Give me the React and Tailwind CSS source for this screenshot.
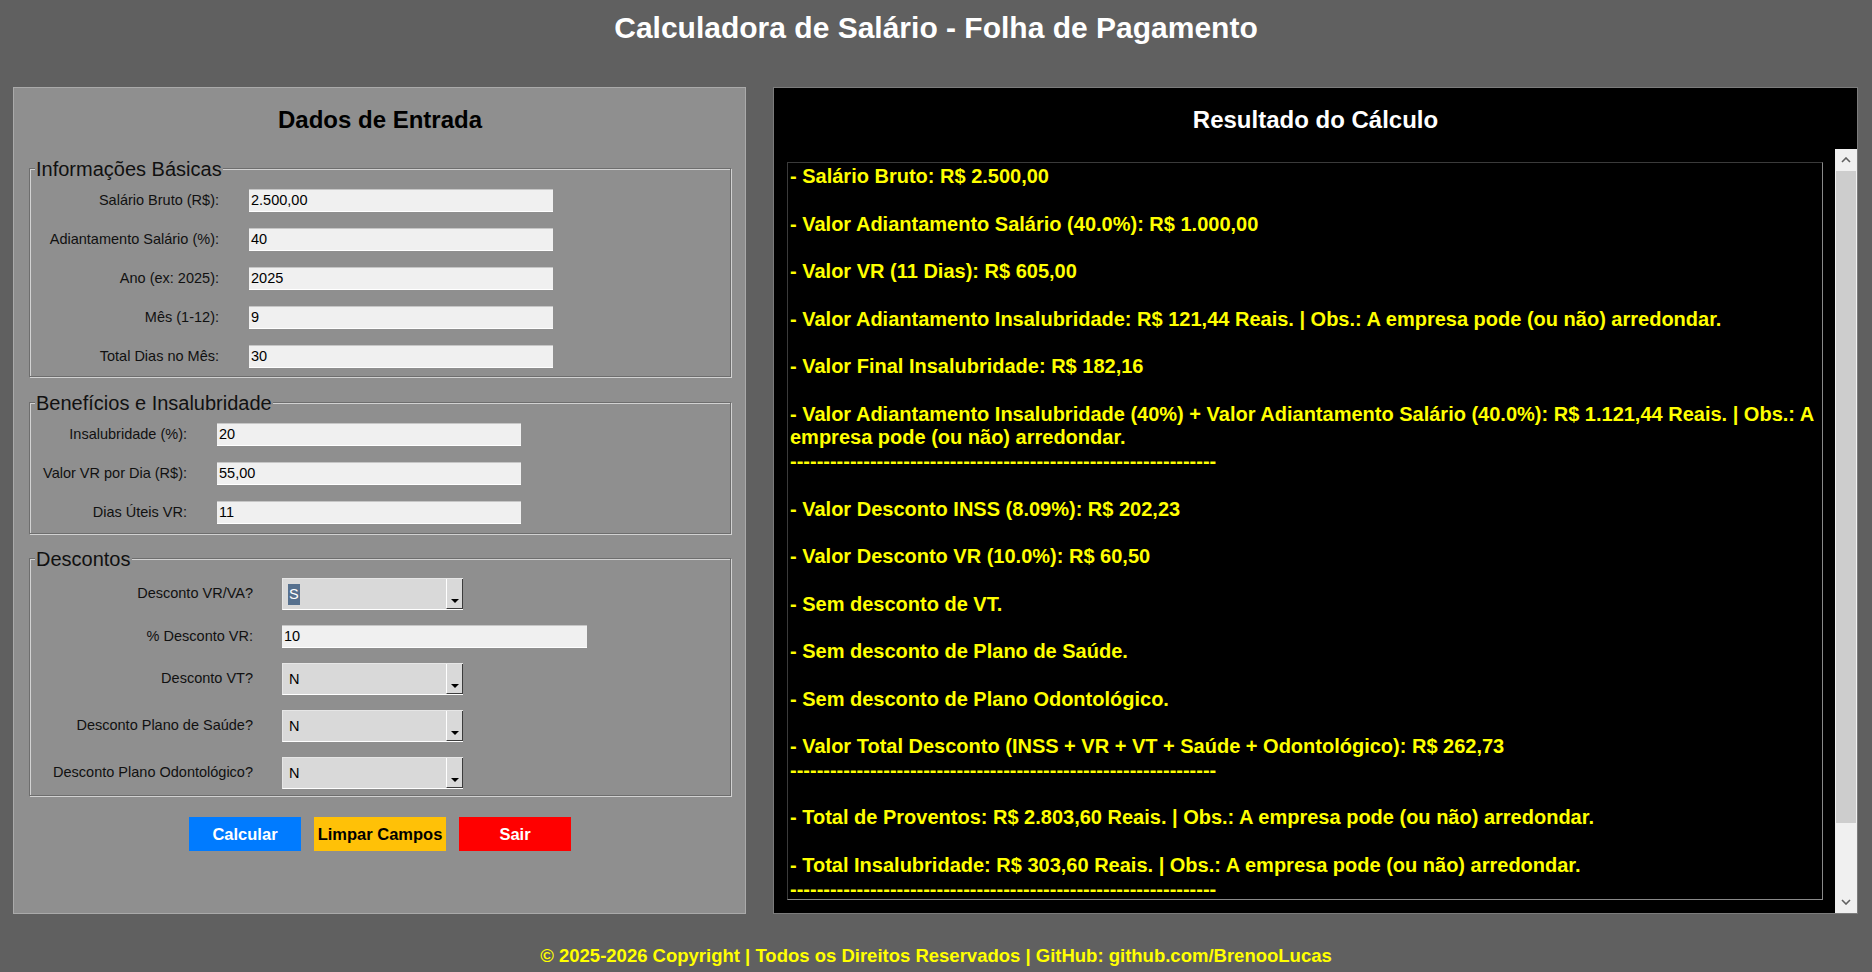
import React from 'react';

const basicRows = [
    ['Salário Bruto (R$):', '2.500,00'],
    ['Adiantamento Salário (%):', '40'],
    ['Ano (ex: 2025):', '2025'],
    ['Mês (1-12):', '9'],
    ['Total Dias no Mês:', '30'],
];

const benefitRows = [
    ['Insalubridade (%):', '20'],
    ['Valor VR por Dia (R$):', '55,00'],
    ['Dias Úteis VR:', '11'],
];

const DASHES = '-'.repeat(64);

// result text, one entry per visual line ('' = blank line)
const resultLines = [
    '- Salário Bruto: R$ 2.500,00',
    '',
    '- Valor Adiantamento Salário (40.0%): R$ 1.000,00',
    '',
    '- Valor VR (11 Dias): R$ 605,00',
    '',
    '- Valor Adiantamento Insalubridade: R$ 121,44 Reais. | Obs.: A empresa pode (ou não) arredondar.',
    '',
    '- Valor Final Insalubridade: R$ 182,16',
    '',
    '- Valor Adiantamento Insalubridade (40%) + Valor Adiantamento Salário (40.0%): R$ 1.121,44 Reais. | Obs.: A',
    'empresa pode (ou não) arredondar.',
    DASHES,
    '',
    '- Valor Desconto INSS (8.09%): R$ 202,23',
    '',
    '- Valor Desconto VR (10.0%): R$ 60,50',
    '',
    '- Sem desconto de VT.',
    '',
    '- Sem desconto de Plano de Saúde.',
    '',
    '- Sem desconto de Plano Odontológico.',
    '',
    '- Valor Total Desconto (INSS + VR + VT + Saúde + Odontológico): R$ 262,73',
    DASHES,
    '',
    '- Total de Proventos: R$ 2.803,60 Reais. | Obs.: A empresa pode (ou não) arredondar.',
    '',
    '- Total Insalubridade: R$ 303,60 Reais. | Obs.: A empresa pode (ou não) arredondar.',
    DASHES,
    '',
];

const GroupBox = ({ title, className, children }) => (
    <div className={`relative border border-[#6e6e6e] shadow-[inset_1px_1px_0_#d2d2d2,1px_1px_0_#d2d2d2] ${className}`}>
        <span className="absolute -top-[12px] left-[5px] bg-[#8f8f8f] px-[1px] text-[20px] leading-[24px] text-[#111]">
            {title}
        </span>
        {children}
    </div>
);

const Entry = ({ value, width = 'w-[304px]' }) => (
    <div className={`${width} h-[23px] bg-[#f0f0f0] border-t border-t-[#c6c6c6] border-b border-b-white px-[2px] text-[14.5px] leading-[21px] text-black`}>
        {value}
    </div>
);

const Field = ({ label, value, labelWidth }) => (
    <div className="flex items-center h-[23px]">
        <span className={`${labelWidth} text-right text-[14.5px] text-[#111] whitespace-nowrap`}>{label}</span>
        <div className="ml-[30px]">
            <Entry value={value} />
        </div>
    </div>
);

const Combo = ({ value, selected }) => (
    <div className="flex w-[181px] h-[32px] bg-[#d9d9d9] border-t border-l border-[#e6e6e6] border-b border-b-white">
        <div className="flex-1 flex items-center pl-[5px] pt-[1px] text-[14.5px] text-black">
            {selected ? (
                <span className="bg-[#56708e] text-white px-[1px] leading-[21px]">{value}</span>
            ) : (
                <span className="pl-[1px]">{value}</span>
            )}
        </div>
        <div className="w-[17px] border-l border-l-white border-r border-r-[#3c3c3c] border-b border-b-[#3c3c3c] flex items-end justify-center pb-[5px]">
            <svg width="8" height="4" viewBox="0 0 8 4">
                <polygon points="0,0 8,0 4,4" fill="#000" />
            </svg>
        </div>
    </div>
);

const ComboRow = ({ label, children }) => (
    <div className="flex items-center">
        <span className="w-[223px] text-right text-[14.5px] text-[#111] whitespace-nowrap">{label}</span>
        <div className="ml-[29px]">{children}</div>
    </div>
);

const Chevron = ({ down }) => (
    <svg width="10" height="6" viewBox="0 0 10 6">
        <path d={down ? 'M1 1 L5 5 L9 1' : 'M1 5 L5 1 L9 5'} fill="none" stroke="#606060" strokeWidth="1.6" />
    </svg>
);

export default function App() {
    return (
        <div className="w-full h-[972px] bg-[#606060] overflow-hidden font-['Liberation_Sans',Arial,sans-serif]">
            <h1 className="pt-[11px] text-center text-[30px] leading-[34px] font-bold text-white">
                Calculadora de Salário - Folha de Pagamento
            </h1>

            <div className="flex px-[13px] mt-[42px] gap-[27px]">
                {/* entrada */}
                <div className="w-[733px] h-[827px] border border-[#aaaaaa] bg-[#8f8f8f] flex flex-col pl-[15px] pr-[14px] pt-[18px]">
                    <h2 className="text-center text-[24px] leading-[28px] font-bold text-black">Dados de Entrada</h2>

                    <GroupBox title="Informações Básicas" className="mt-[34px] pt-[20px] pb-[8px]">
                        <div className="flex flex-col gap-[16px]">
                            {basicRows.map(([label, value]) => (
                                <Field key={label} label={label} value={value} labelWidth="w-[189px]" />
                            ))}
                        </div>
                    </GroupBox>

                    <GroupBox title="Benefícios e Insalubridade" className="mt-[25px] pt-[20px] pb-[9px]">
                        <div className="flex flex-col gap-[16px]">
                            {benefitRows.map(([label, value]) => (
                                <Field key={label} label={label} value={value} labelWidth="w-[157px]" />
                            ))}
                        </div>
                    </GroupBox>

                    <GroupBox title="Descontos" className="mt-[24px] pt-[19px] pb-[6px]">
                        <div className="flex flex-col gap-[15px]">
                            <ComboRow label="Desconto VR/VA?"><Combo value="S" selected /></ComboRow>
                            <ComboRow label="% Desconto VR:"><Entry value="10" width="w-[305px]" /></ComboRow>
                            <ComboRow label="Desconto VT?"><Combo value="N" /></ComboRow>
                            <ComboRow label="Desconto Plano de Saúde?"><Combo value="N" /></ComboRow>
                            <ComboRow label="Desconto Plano Odontológico?"><Combo value="N" /></ComboRow>
                        </div>
                    </GroupBox>

                    <div className="flex justify-center gap-[13px] mt-[21px]">
                        <button className="w-[112px] h-[34px] bg-[#007bff] text-white font-bold text-[16.5px]">Calcular</button>
                        <button className="w-[132px] h-[34px] bg-[#ffc107] text-black font-bold text-[16.5px]">Limpar Campos</button>
                        <button className="w-[112px] h-[34px] bg-[#ff0000] text-white font-bold text-[16.5px]">Sair</button>
                    </div>
                </div>

                {/* resultado */}
                <div className="w-[1085px] h-[827px] border border-[#7c7c7c] bg-black flex flex-col">
                    <h2 className="pt-[18px] pb-[15px] text-center text-[24px] leading-[28px] font-bold text-white">Resultado do Cálculo</h2>
                    <div className="flex-1 flex min-h-0">
                        <div className="flex-1 ml-[13px] my-[13px] border border-t-[#3a3a3a] border-l-[#3a3a3a] border-b-[#8a8a8a] border-r-[#8a8a8a] overflow-hidden pl-[2px] pt-[2px]">
                            {resultLines.map((line, i) => (
                                <div key={i} className="whitespace-pre text-[20px] leading-[23.75px] font-bold text-[#ffff00]">
                                    {line || '\u00a0'}
                                </div>
                            ))}
                        </div>
                        <div className="ml-[12px] w-[22px] flex flex-col bg-[#f0f0f0]">
                            <div className="h-[22px] flex items-center justify-center"><Chevron /></div>
                            <div className="h-[652px] mx-[1px] bg-[#cdcdcd]" />
                            <div className="flex-1" />
                            <div className="h-[22px] flex items-center justify-center"><Chevron down /></div>
                        </div>
                    </div>
                </div>
            </div>

            <p className="mt-[31px] text-center text-[18.5px] leading-[22px] font-bold text-[#ffff00]">
                © 2025-2026 Copyright | Todos os Direitos Reservados | GitHub: github.com/BrenooLucas
            </p>
        </div>
    );
}
